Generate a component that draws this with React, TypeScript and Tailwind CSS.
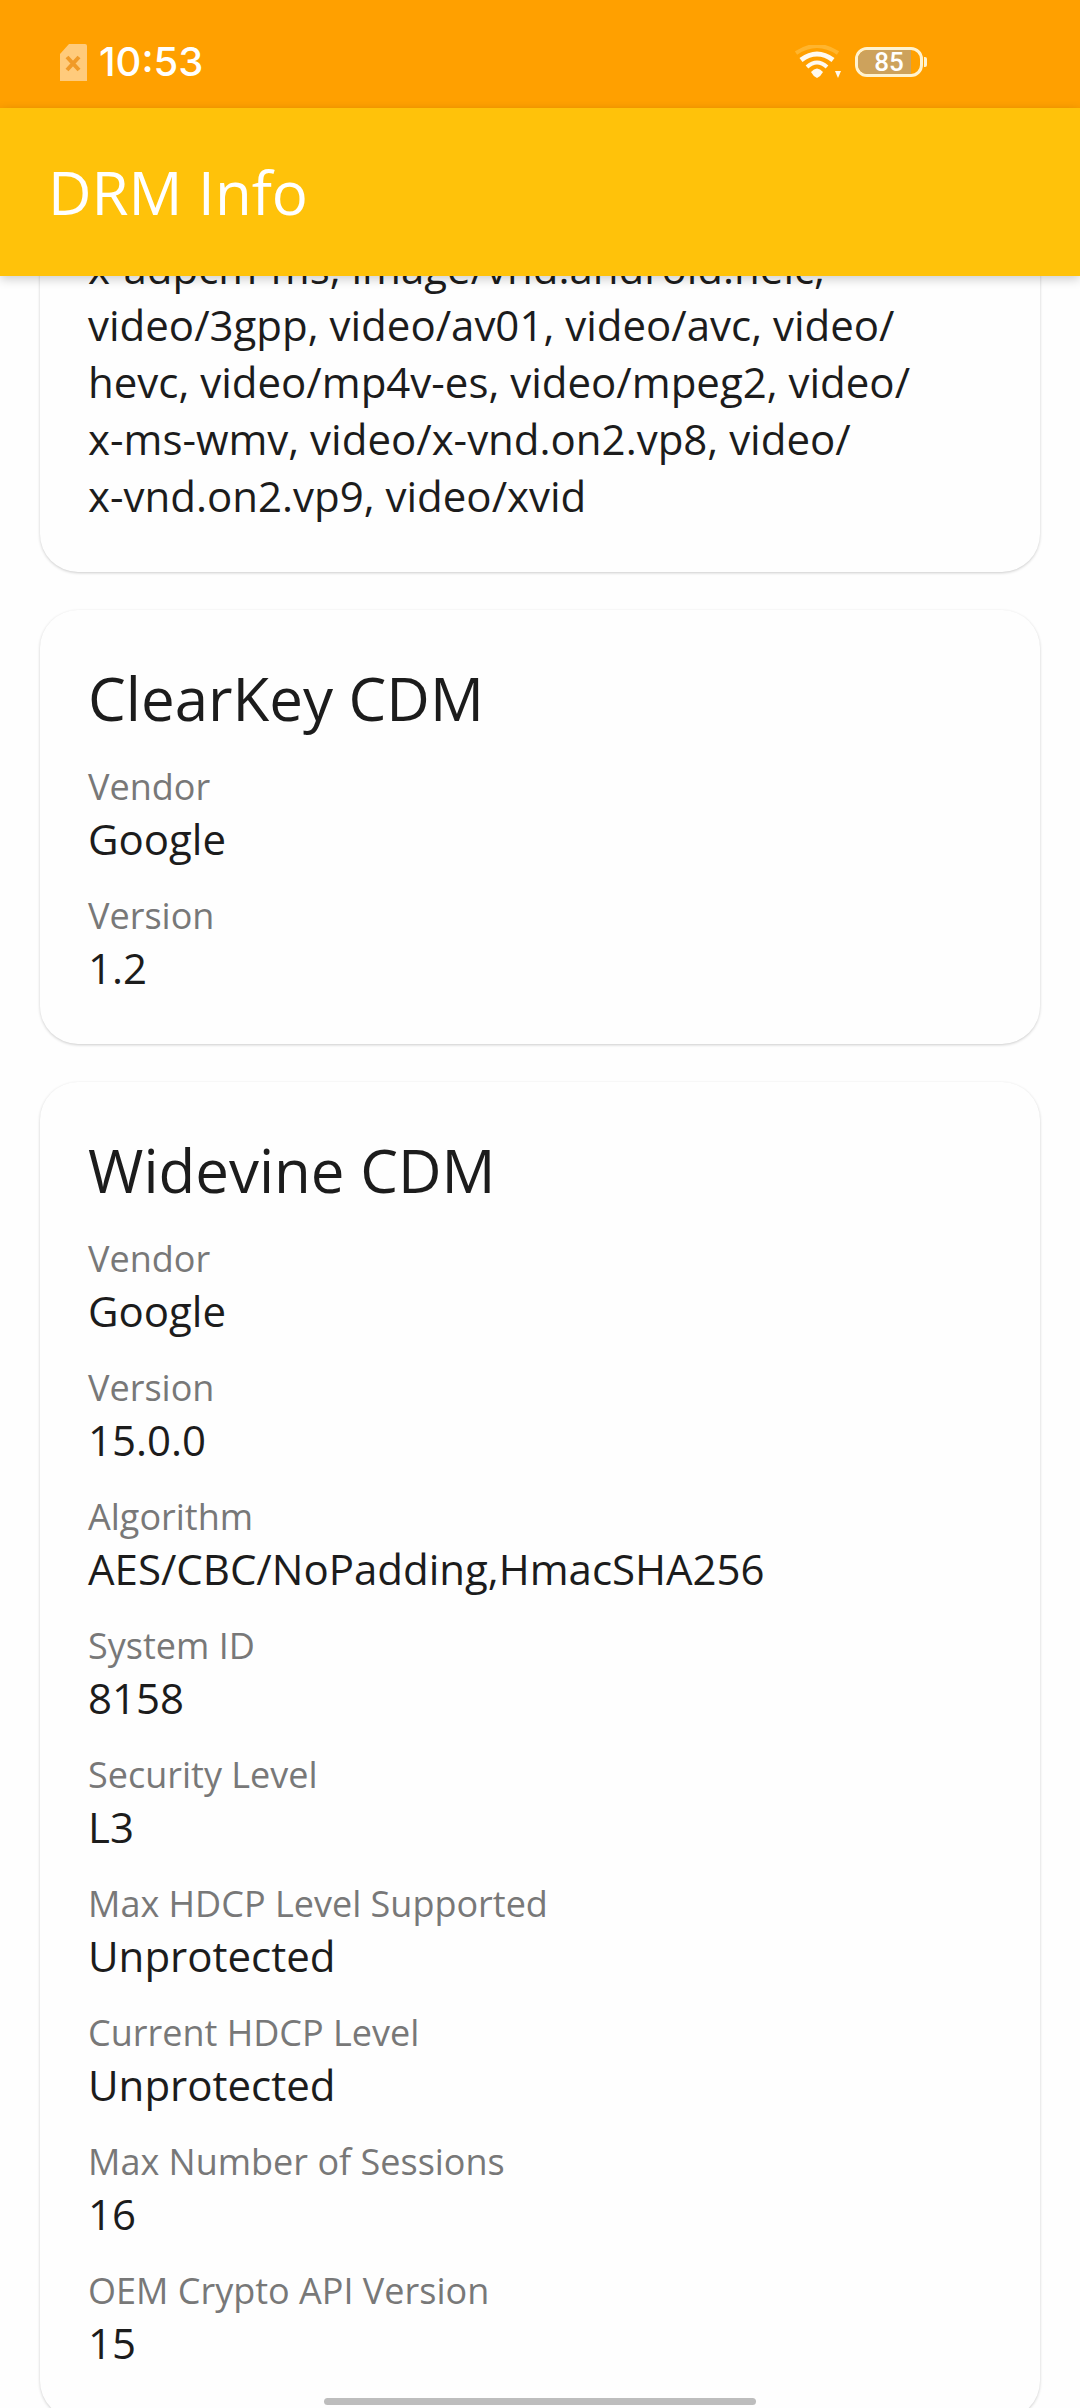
interface InfoItem {
  label: string;
  value: string;
}

interface InfoCardProps {
  title: string;
  items: InfoItem[];
}

const codecLines = [
  "x-adpcm-ms, image/vnd.android.heic,",
  "video/3gpp, video/av01, video/avc, video/",
  "hevc, video/mp4v-es, video/mpeg2, video/",
  "x-ms-wmv, video/x-vnd.on2.vp8, video/",
  "x-vnd.on2.vp9, video/xvid",
];

const clearKey: InfoItem[] = [
  { label: "Vendor", value: "Google" },
  { label: "Version", value: "1.2" },
];

const widevine: InfoItem[] = [
  { label: "Vendor", value: "Google" },
  { label: "Version", value: "15.0.0" },
  { label: "Algorithm", value: "AES/CBC/NoPadding,HmacSHA256" },
  { label: "System ID", value: "8158" },
  { label: "Security Level", value: "L3" },
  { label: "Max HDCP Level Supported", value: "Unprotected" },
  { label: "Current HDCP Level", value: "Unprotected" },
  { label: "Max Number of Sessions", value: "16" },
  { label: "OEM Crypto API Version", value: "15" },
];

function SimIcon() {
  return (
    <svg className="h-[37px] w-[27px]" viewBox="0 0 27 37" fill="none">
      <path d="M9 0H25Q27 0 27 2V37H0V10Z" fill="#ffcb7c" />
      <path d="M7 13L19 26M19 13L7 26" stroke="#f09a28" strokeWidth="4" />
    </svg>
  );
}

function WifiIcon() {
  return (
    <svg className="h-[34px] w-[46px]" viewBox="0 0 46 34" fill="none">
      <path d="M1 8Q22 -6 43 8" stroke="#ffb52e" strokeWidth="4" />
      <path d="M6 15Q22 3 38 15" stroke="#fffaf0" strokeWidth="5" />
      <path d="M12 22Q22 13 32 22" stroke="#fffaf0" strokeWidth="4" />
      <path d="M16 27Q22 20 28 27Q26 31 22 33Q18 31 16 27Z" fill="#fffaf0" />
      <path d="M40 26H46L43 33Z" fill="#fffaf0" />
    </svg>
  );
}

function Battery({ level }: { level: number }) {
  return (
    <div className="flex items-center gap-px">
      <div className="relative flex h-[30px] w-[68px] items-center justify-center overflow-hidden rounded-[12px] border-[3px] border-[#fff3d0]">
        <div className="absolute inset-y-0 left-0 bg-[#cda25c]" style={{ width: `${level}%` }}></div>
        <span className="relative font-['Roboto',sans-serif] text-[26px] leading-[26px] font-medium text-white">{level}</span>
      </div>
      <div className="h-[10px] w-[3px] rounded-r-[2px] bg-[#fff3d0]"></div>
    </div>
  );
}

function StatusBar() {
  return (
    <div className="flex h-[108px] shrink-0 items-center justify-between bg-[#ffa000] pt-4 pr-[153px] pl-[60px]">
      <div className="flex items-center gap-3">
        <SimIcon />
        <span className="font-['Inter',sans-serif] text-[40px] leading-[48px] font-medium text-white">10:53</span>
      </div>
      <div className="flex items-center gap-[14px]">
        <WifiIcon />
        <Battery level={85} />
      </div>
    </div>
  );
}

function InfoCard({ title, items }: InfoCardProps) {
  return (
    <section className="rounded-[38px] bg-[#fefefe] p-12 shadow-[0_1px_3px_rgba(0,0,0,0.2)]">
      <h2 className="text-[60px] leading-[80px]">{title}</h2>
      <dl>
        {items.map((item) => (
          <div key={item.label} className="pt-[26px]">
            <dt className="text-[36px] leading-[46px] text-[#787878]">{item.label}</dt>
            <dd className="text-[42px] leading-[57px]">{item.value}</dd>
          </div>
        ))}
      </dl>
    </section>
  );
}

export default function App() {
  return (
    <div className="relative flex h-screen flex-col overflow-hidden bg-[#fefefe] font-['Open_Sans',sans-serif] text-[#1c1c1c]">
      <StatusBar />
      <header className="relative z-10 flex h-[168px] shrink-0 items-center bg-[#ffc20a] px-12 shadow-[0_3px_10px_rgba(0,0,0,0.2)]">
        <h1 className="text-[60px] leading-[80px] text-white">DRM Info</h1>
      </header>

      <main className="min-h-0 flex-1 overflow-hidden">
        {/* The list is scrolled, so the first card starts under the app bar */}
        <div className="mx-10 -mt-[37px] flex flex-col gap-[38px]">
          <section className="rounded-b-[38px] bg-[#fefefe] px-12 pb-12 shadow-[0_1px_3px_rgba(0,0,0,0.2)]">
            <p className="text-[42px] leading-[57px] whitespace-pre-line">{codecLines.join("\n")}</p>
          </section>
          <InfoCard title="ClearKey CDM" items={clearKey} />
          <InfoCard title="Widevine CDM" items={widevine} />
        </div>
      </main>

      {/* Gesture handle */}
      <div className="absolute bottom-[3px] left-[30%] h-[7px] w-[40%] rounded-full bg-[#bdbdbd]"></div>
    </div>
  );
}
